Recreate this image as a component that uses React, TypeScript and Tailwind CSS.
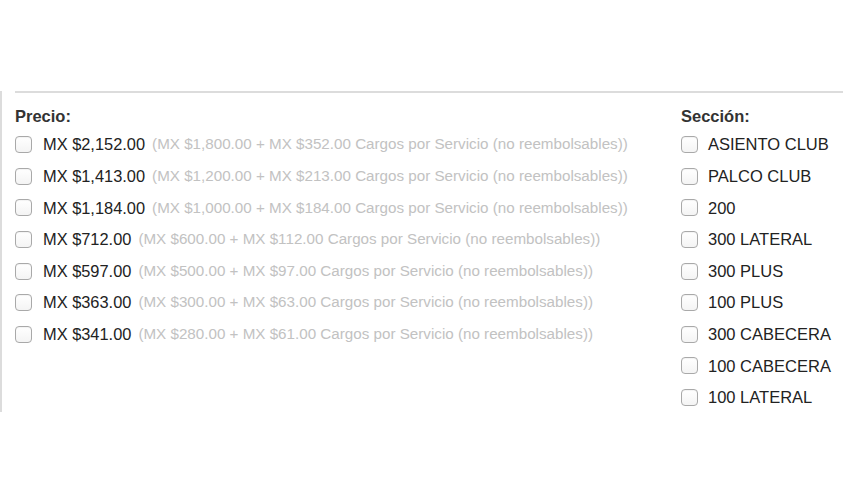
import React from "react";

interface Precio {
  total: string;
  base: string;
  cargo: string;
}

const precios: Precio[] = [
  { total: "MX $2,152.00", base: "MX $1,800.00", cargo: "MX $352.00" },
  { total: "MX $1,413.00", base: "MX $1,200.00", cargo: "MX $213.00" },
  { total: "MX $1,184.00", base: "MX $1,000.00", cargo: "MX $184.00" },
  { total: "MX $712.00", base: "MX $600.00", cargo: "MX $112.00" },
  { total: "MX $597.00", base: "MX $500.00", cargo: "MX $97.00" },
  { total: "MX $363.00", base: "MX $300.00", cargo: "MX $63.00" },
  { total: "MX $341.00", base: "MX $280.00", cargo: "MX $61.00" },
];

const secciones: string[] = [
  "ASIENTO CLUB",
  "PALCO CLUB",
  "200",
  "300 LATERAL",
  "300 PLUS",
  "100 PLUS",
  "300 CABECERA",
  "100 CABECERA",
  "100 LATERAL",
];

const Box: React.FC = () => (
  <span className="inline-block w-[17px] h-[17px] shrink-0 rounded-[4px] border border-[#a9a9a9] bg-gradient-to-b from-white to-[#f4f4f4] shadow-[inset_0_1px_1px_rgba(0,0,0,0.05)]" />
);

const App: React.FC = () => {
  return (
    <div className="w-[843px] h-[504px] bg-white font-['Liberation_Sans',Arial,sans-serif] text-[#222]">
      <div className="pt-[91px]">
        <div className="h-[321px] border-l-2 border-[#dcdcdc] pl-[13px]">
          <div className="border-t-2 border-[#dcdcdc] pt-[10px] flex">
            <div className="w-[666px]">
              <div className="h-[26px] flex items-center text-[16.5px] font-bold text-[#333]">
                Precio:
              </div>
              {precios.map((p) => (
                <label key={p.total} className="h-[31.6px] flex items-center">
                  <Box />
                  <span className="ml-[11px] text-[16.4px] whitespace-nowrap">{p.total}</span>
                  <span className="ml-[7px] text-[15.2px] text-[#c2c2c2] whitespace-nowrap">
                    ({p.base} + {p.cargo} Cargos por Servicio (no reembolsables))
                  </span>
                </label>
              ))}
            </div>
            <div>
              <div className="h-[26px] flex items-center text-[16.5px] font-bold text-[#333]">
                Sección:
              </div>
              {secciones.map((s) => (
                <label key={s} className="h-[31.6px] flex items-center">
                  <Box />
                  <span className="ml-[10px] text-[16.5px] whitespace-nowrap">{s}</span>
                </label>
              ))}
            </div>
          </div>
        </div>
      </div>
    </div>
  );
};

export default App;
